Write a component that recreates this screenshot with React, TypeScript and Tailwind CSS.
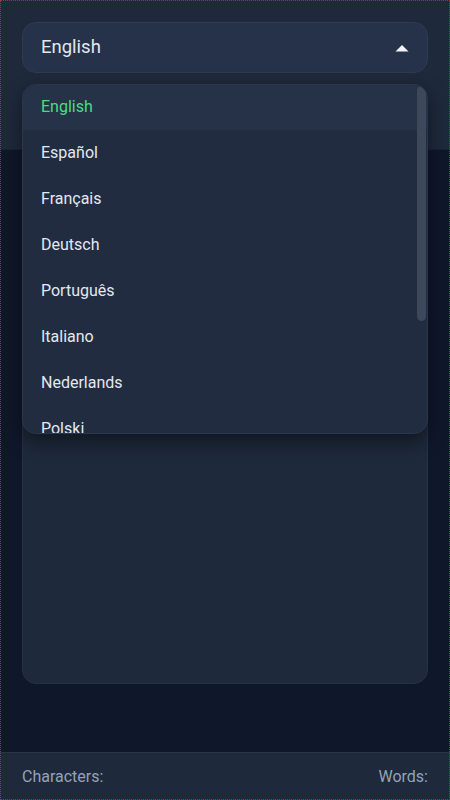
const LANGUAGES = [
  'English',
  'Español',
  'Français',
  'Deutsch',
  'Português',
  'Italiano',
  'Nederlands',
  'Polski',
];

function CaretUp() {
  return (
    <svg width="14" height="8" viewBox="0 0 14 8" aria-hidden className="shrink-0">
      <path d="M0.5 7.5 L7 1 L13.5 7.5 Z" fill="#f1f5f9" />
    </svg>
  );
}

export default function App() {
  const selected = 'English';

  return (
    <div className="flex h-[800px] w-full flex-col bg-[#0f172a] font-['Roboto',sans-serif] outline-1 -outline-offset-1 outline-dotted outline-[#c0262d]">
      <header className="h-[150px] shrink-0 border-b border-[#1a2436] bg-[#1e293b] px-[22px] pt-[22px]">
        <div className="relative">
          <button
            type="button"
            className="flex h-[51px] w-full items-center justify-between rounded-[14px] border border-[#2f3b50] bg-[#263249] pl-[18px] pr-[18px] text-[18.5px] text-[#e2e8f0]"
          >
            <span>{selected}</span>
            <CaretUp />
          </button>

          {/* open dropdown list */}
          <div className="absolute left-0 right-0 top-[62px] z-10 h-[350px] overflow-hidden rounded-[14px] border border-[#2b364a] bg-[#222c40] shadow-[0_8px_20px_rgba(0,0,0,0.45)]">
            <ul className="-mt-[1px]">
              {LANGUAGES.map((lang) => (
                <li
                  key={lang}
                  className={
                    lang === selected
                      ? 'flex h-[46px] items-center bg-[#263248] pl-[18px] text-[16px] text-[#4ade80]'
                      : 'flex h-[46px] items-center pl-[18px] text-[16px] text-[#e2e8f0]'
                  }
                >
                  {lang}
                </li>
              ))}
            </ul>
            <div className="absolute right-[1px] top-[1px] h-[235px] w-[9px] rounded-full bg-[#3e485b]" />
          </div>
        </div>
      </header>

      <main className="flex flex-1 flex-col px-[22px] pb-[68px] pt-[20px]">
        <div className="flex-1 rounded-[14px] border border-[#263146] bg-[#1e293b]" />
      </main>

      <footer className="flex h-[48px] shrink-0 items-center justify-between border-t border-[#2a3548] bg-[#1e293b] px-[22px] text-[16px] text-[#94a3b8]">
        <span>Characters:</span>
        <span>Words:</span>
      </footer>
    </div>
  );
}
